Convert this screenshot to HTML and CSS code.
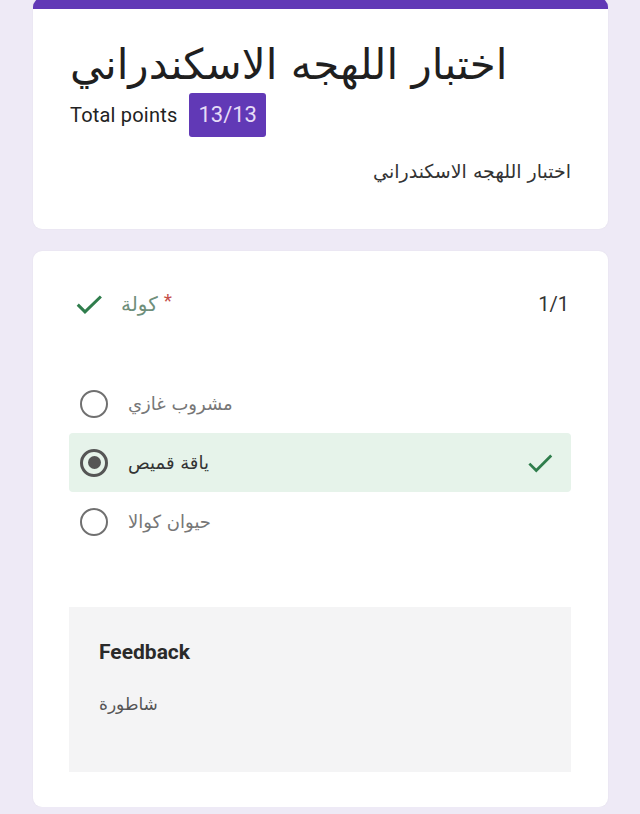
FILE: index.html
```html
<!DOCTYPE html>
<html lang="ar">
<head>
<meta charset="utf-8">
<link rel="stylesheet" href="styles.css">
</head>
<body>
<main class="page">
  <section class="card header-card">
    <h1 class="title">اختبار اللهجه الاسكندراني</h1>
    <div class="points">
      <span class="points-label">Total points</span>
      <span class="badge">13/13</span>
    </div>
    <p class="desc" dir="rtl">اختبار اللهجه الاسكندراني</p>
  </section>

  <section class="card question-card">
    <div class="q-head">
      <div class="q-left">
        <svg class="check" viewBox="0 0 24 24" width="30" height="30"><path d="M3 12.5l5.8 5.8L21.5 6" fill="none" stroke="#2f7d4c" stroke-width="2.4"/></svg>
        <span class="q-title">كولة</span>
        <span class="req">*</span>
      </div>
      <span class="score">1/1</span>
    </div>

    <div class="options">
      <div class="option">
        <span class="radio"></span>
        <span class="opt-text">مشروب غازي</span>
      </div>
      <div class="option correct">
        <span class="radio checked"></span>
        <span class="opt-text dark">ياقة قميص</span>
        <svg class="check opt-check" viewBox="0 0 24 24" width="30" height="30"><path d="M3.5 12.5l5.5 5.5L21 6" fill="none" stroke="#2f7d4c" stroke-width="2.2"/></svg>
      </div>
      <div class="option">
        <span class="radio"></span>
        <span class="opt-text">حيوان كوالا</span>
      </div>
    </div>

    <div class="feedback">
      <div class="fb-title">Feedback</div>
      <div class="fb-text">شاطورة</div>
    </div>
  </section>
</main>
</body>
</html>
```
FILE: styles.css
```css
html, body {
  margin: 0;
  padding: 0;
  background: #eeeaf6;
}
body {
  font-family: Roboto, "DejaVu Sans", sans-serif;
  color: #202124;
}
.page {
  width: 575px;
  margin: -2px 0 0 33px;
  display: flex;
  flex-direction: column;
  gap: 22px;
}
.card {
  background: #fff;
  border-radius: 9px;
  box-shadow: 0 0 2px rgba(0,0,0,0.06);
}
.header-card {
  border-top: 11px solid #6139b6;
  height: 231px;
  box-sizing: border-box;
  padding: 28px 36px 0 37px;
  display: flex;
  flex-direction: column;
}
.title {
  margin: 0;
  font-family: "DejaVu Sans", sans-serif;
  font-weight: normal;
  font-size: 42px;
  line-height: 56px;
  color: #1f1f1f;
  align-self: flex-start;
}
.points {
  display: flex;
  align-items: center;
  gap: 12px;
  margin-top: 0;
}
.points-label {
  font-size: 20px;
  color: #222;
  letter-spacing: 0.2px;
}
.badge {
  background: #6139b6;
  color: #e6dcf7;
  font-size: 22px;
  border-radius: 3px;
  padding: 0 9px;
  height: 44px;
  line-height: 44px;
}
.desc {
  margin: 23px 1px 0 0;
  font-family: "DejaVu Sans", sans-serif;
  font-size: 19px;
  color: #333;
  text-align: right;
}
.question-card {
  height: 556px;
  box-sizing: border-box;
  padding: 38px 37px 0 36px;
  display: flex;
  flex-direction: column;
}
.q-head {
  display: flex;
  justify-content: space-between;
  align-items: center;
  height: 30px;
}
.q-left {
  display: flex;
  align-items: center;
  padding-left: 5px;
}
.q-title {
  margin-left: 17px;
  font-family: "DejaVu Sans", sans-serif;
  font-size: 20px;
  color: #6f8f7b;
}
.req {
  color: #c5504a;
  font-size: 19px;
  margin-left: 6px;
  position: relative;
  top: -4px;
}
.score {
  font-size: 20px;
  color: #333;
  margin-right: 2px;
}
.options {
  margin-top: 55px;
  display: flex;
  flex-direction: column;
}
.option {
  height: 59px;
  display: flex;
  align-items: center;
  padding: 0 16px 0 11px;
  border-radius: 4px;
}
.option.correct {
  background: #e6f3ea;
}
.radio {
  width: 28px;
  height: 28px;
  border: 2.5px solid #707070;
  border-radius: 50%;
  box-sizing: border-box;
  flex-shrink: 0;
  display: flex;
  align-items: center;
  justify-content: center;
}
.radio.checked {
  border-color: #555;
  border-width: 3px;
}
.radio.checked::after {
  content: "";
  width: 13px;
  height: 13px;
  border-radius: 50%;
  background: #555;
}
.opt-text {
  margin-left: 20px;
  font-family: "DejaVu Sans", sans-serif;
  font-size: 18px;
  color: #777;
}
.opt-text.dark {
  color: #333;
}
.opt-check {
  margin-left: auto;
}
.feedback {
  margin-top: 56px;
  height: 165px;
  background: #f4f4f5;
  padding: 33px 30px 0;
  box-sizing: border-box;
}
.fb-title {
  font-size: 21px;
  font-weight: 700;
  color: #2a2a2a;
}
.fb-text {
  margin-top: 30px;
  font-family: "DejaVu Sans", sans-serif;
  font-size: 17px;
  color: #555;
}
```
